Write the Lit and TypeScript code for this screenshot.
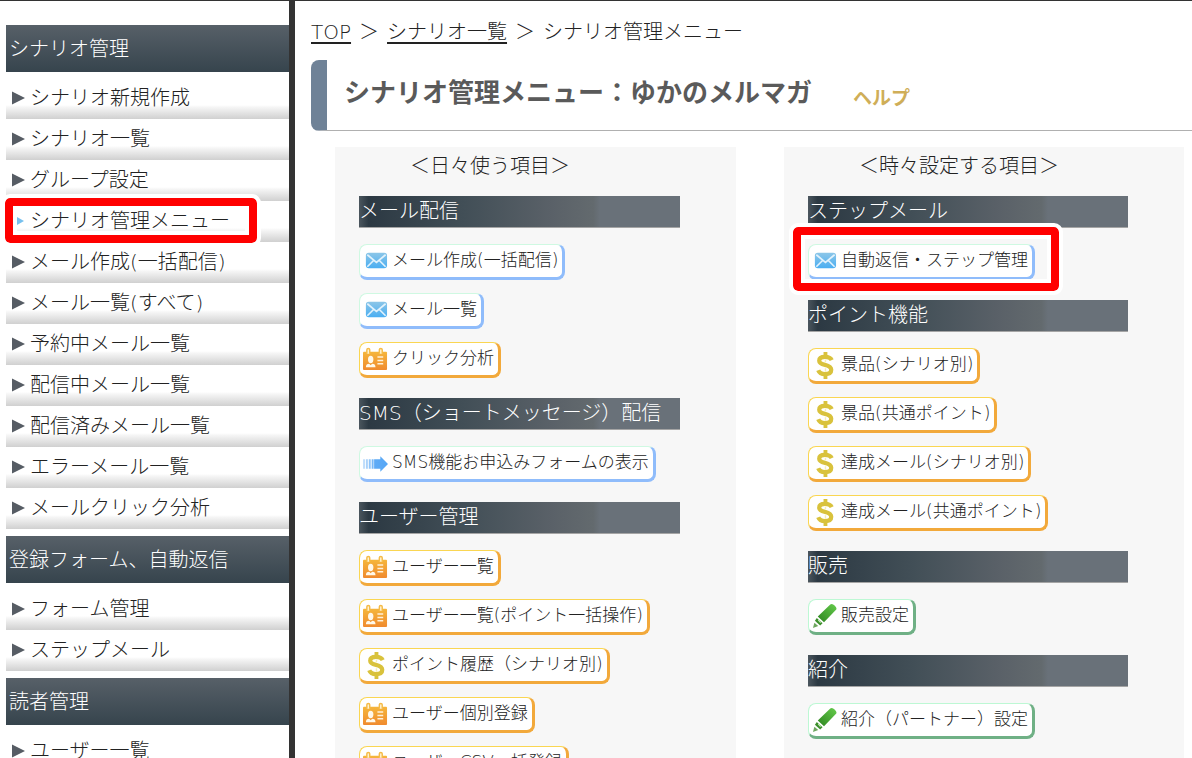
import { LitElement, html, css, svg } from "lit";
import { customElement } from "lit/decorators.js";

type Item = { label: string; icon: "mail" | "card" | "coin" | "pen" | "arrow"; tone: "blue" | "gold" | "green"; marked?: boolean };
type Group = { title: string; items: Item[] };

const mail = (label: string, marked = false): Item => ({ label, icon: "mail", tone: "blue", marked });
const card = (label: string): Item => ({ label, icon: "card", tone: "gold" });
const coin = (label: string): Item => ({ label, icon: "coin", tone: "gold" });
const pen = (label: string): Item => ({ label, icon: "pen", tone: "green" });

const NAV: { title: string; links: string[] }[] = [
  {
    title: "シナリオ管理",
    links: [
      "シナリオ新規作成", "シナリオ一覧", "グループ設定", "シナリオ管理メニュー", "メール作成(一括配信)",
      "メール一覧(すべて)", "予約中メール一覧", "配信中メール一覧", "配信済みメール一覧", "エラーメール一覧", "メールクリック分析",
    ],
  },
  { title: "登録フォーム、自動返信", links: ["フォーム管理", "ステップメール"] },
  { title: "読者管理", links: ["ユーザー一覧"] },
];
const CURRENT = "シナリオ管理メニュー";

const DAILY: Group[] = [
  { title: "メール配信", items: [mail("メール作成(一括配信)"), mail("メール一覧"), card("クリック分析")] },
  { title: "SMS（ショートメッセージ）配信", items: [{ label: "SMS機能お申込みフォームの表示", icon: "arrow", tone: "blue" }] },
  {
    title: "ユーザー管理",
    items: [
      card("ユーザー一覧"), card("ユーザー一覧(ポイント一括操作)"), coin("ポイント履歴（シナリオ別)"),
      card("ユーザー個別登録"), card("ユーザーCSV一括登録"),
    ],
  },
];

const OCCASIONAL: Group[] = [
  { title: "ステップメール", items: [mail("自動返信・ステップ管理", true)] },
  {
    title: "ポイント機能",
    items: [coin("景品(シナリオ別)"), coin("景品(共通ポイント)"), coin("達成メール(シナリオ別)"), coin("達成メール(共通ポイント)")],
  },
  { title: "販売", items: [pen("販売設定")] },
  { title: "紹介", items: [pen("紹介（パートナー）設定")] },
];

const ICONS = {
  mail: svg`
    <defs><linearGradient id="m" x1="0" y1="0" x2="0" y2="1"><stop offset="0" stop-color="#8cc6e8"/><stop offset="1" stop-color="#4aaef2"/></linearGradient></defs>
    <rect x="3" y="6" width="22" height="16" rx="3" fill="url(#m)"/>
    <path d="M4.500 8 L14 16 L23.500 8 M4.500 20.500 L11 14 M23.500 20.500 L17 14" fill="none" stroke="#e2f2fc" stroke-width="1.700"/>`,
  card: svg`
    <defs><linearGradient id="c" x1="0" y1="0" x2="0" y2="1"><stop offset="0" stop-color="#f5b63c"/><stop offset="1" stop-color="#f08a2e"/></linearGradient></defs>
    <rect x="0" y="7" width="25" height="19" rx="1" fill="url(#c)"/>
    <path d="M4 9 V5 Q4 3.500 5.500 3.500 T7 5 V9 M17 9 V5 Q17 3.500 18.500 3.500 T20 5 V9" fill="#fff3d0" stroke="#f5bb48" stroke-width="1.500"/>
    <ellipse cx="8" cy="15" rx="2.800" ry="3.800" fill="#fff8ea"/>
    <path d="M3 23 Q3 19.500 6.500 19.500 L8 21 L9.500 19.500 Q13 19.500 13 23 Z" fill="#fff8ea"/>
    <path d="M15 12.500 H21 M15 16 H21 M15 19.500 H21" stroke="#fff0d8" stroke-width="1.600"/>`,
  coin: svg`
    <path d="M20.500 9.500 Q19 6 13.500 6 Q7.500 6 7.500 10 Q7.500 13 13.500 14.300 Q20 15.800 20 19.500 Q20 24 13.500 24 Q8 24 6.500 20" fill="none" stroke="#d9c23c" stroke-width="4.400"/>
    <path d="M14 1 V6 M14 24 V29" stroke="#d9c23c" stroke-width="4"/>
    <path d="M14 9 V11.500 M14 18 V21.500" stroke="#f6efb5" stroke-width="1.500"/>`,
  pen: svg`
    <defs><linearGradient id="p" x1="1" y1="0" x2="0" y2="1"><stop offset="0" stop-color="#66cc4c"/><stop offset="1" stop-color="#2d8420"/></linearGradient></defs>
    <path d="M19 2.500 Q21 1 23.500 3.500 Q26.500 6.500 25 8 L12.500 21 L6 15 Z" fill="url(#p)"/>
    <path d="M5 16.500 L11 22 L8.500 24.500 L3 19.500 Z" fill="#3d8f2c"/>
    <path d="M2.500 21.500 L6.500 25 L1 27 Z" fill="#6da65e"/>
    <path d="M6.500 18.500 L9 21.500" stroke="#c8ebbd" stroke-width="1.200"/>`,
  arrow: svg`
    <defs><linearGradient id="a" gradientUnits="userSpaceOnUse" x1="0" y1="0" x2="26" y2="0"><stop offset="0" stop-color="#c8e1fb"/><stop offset="0.500" stop-color="#5fabf6"/><stop offset="1" stop-color="#55a6f5"/></linearGradient></defs>
    <path d="M0 10.500h2v10h-2z M3 10.500h2v10h-2z M6 10.500h2v10h-2z M9 10.500h2v10h-2z M11.500 10.500h6.500v-3l8 8 l-8 8v-3h-6.500z" fill="url(#a)"/>`,
};

@customElement("app-root")
export class AppRoot extends LitElement {
  static styles = css`
    :host {
      display: flex;
      height: 100vh;
      overflow: hidden;
      box-sizing: border-box;
      border-top: 1px solid #333;
      background: #fff;
      color: #222;
      font-family: "DejaVu Sans", "Noto Sans CJK JP", sans-serif;
      font-size: 20px;
      font-weight: 300;
      line-height: 30px;
    }
    * { box-sizing: border-box; }
    h1, h2, h3, ul, p { margin: 0; padding: 0; font-weight: inherit; font-size: inherit; }
    ul { list-style: none; }
    a { color: inherit; text-decoration: none; }

    .side { flex: 0 0 295px; padding: 24px 0 0 6px; border-right: 6px solid #333; overflow: hidden; }
    .side-title {
      padding: 9px 3px 8px;
      color: #fff;
      background: linear-gradient(#576068, #36444d);
    }
    .side-list { padding: 6px 0 7px; }
    .side-link {
      position: relative;
      display: flex;
      align-items: center;
      gap: 4px;
      height: 41px;
      padding: 0 0 1px 6px;
      background: linear-gradient(#fff 27px, #f6f6f6 29px, #d0d0d0);
    }
    .tri { width: 14px; height: 14px; flex: none; }
    .frame {
      position: absolute;
      border: 8px solid #f00;
      border-radius: 5px;
      outline: 4px solid #fff;
      box-shadow: inset 0 0 0 4px #fff;
      pointer-events: none;
    }
    .frame-side { left: -1px; top: -3px; width: 252px; height: 45px; z-index: 1; }
    .frame-main { left: -15px; right: -24px; top: -17px; height: 64px; }

    .main { flex: 1; min-width: 0; padding: 16px 0 0 16px; overflow: hidden; }
    .crumbs { display: flex; gap: 8px; }
    .crumbs a { text-decoration: underline; text-decoration-thickness: 2px; text-underline-offset: 3px; }
    .heading {
      display: flex;
      align-items: center;
      gap: 41px;
      height: 71px;
      margin-top: 13px;
      padding: 0 0 4px 17px;
      border-left: 16px solid #6f8297;
      border-bottom: 1px solid #b0b0b0;
      border-radius: 8px 0 0 8px;
    }
    .heading h1 { font-size: 26px; font-weight: 700; color: #5a5a5a; }
    .help { padding-top: 9px; font-size: 19px; font-weight: 700; color: #cfae58; }
    .columns { display: grid; grid-template-columns: 401px 400px; gap: 48px; padding: 16px 0 0 24px; }
    .column { padding: 4px 56px 24px 24px; background: #f7f7f7; }
    .column-title { padding: 0 0 15px 51px; }
    .group + .group { padding-top: 20px; }
    .group-title {
      height: 32px;
      color: #fff;
      white-space: nowrap;
      border-bottom: 1px solid #a5a5a5;
      background: linear-gradient(90deg, #4b565e 0, #2c3943 3%, #424f57 33%, #5a6168 60%, #636a6e 73%, #697179 75%, #697179);
    }
    .group-list { display: flex; flex-direction: column; align-items: flex-start; gap: 13px; padding: 16px 0 0; }
    .group-list li { position: relative; }
    .tool {
      display: flex;
      align-items: center;
      height: 36px;
      gap: 4px;
      padding: 0 4px 0 3px;
      border: 1px solid;
      border-right-width: 3px;
      border-bottom-width: 3px;
      border-radius: 8px;
      background: #fff;
      font-size: 17px;
      line-height: 26px;
      white-space: nowrap;
    }
    .tool span { padding-bottom: 2px; }
    .tool svg { width: 25px; height: 28px; flex: none; }
    .blue { border-color: #cff9e2 #8fbcfb #8fbcfb #cff9e2; }
    .gold { border-color: #fad652 #f2a93b #f2a93b #fad652; }
    .green { border-color: #bdf8d4 #6fb085 #6fb085 #bdf8d4; }
  `;

  private column(title: string, groups: Group[]) {
    return html`<section class="column">
      <h2 class="column-title">${title}</h2>
      ${groups.map((g) => html`<div class="group">
        <h3 class="group-title">${g.title}</h3>
        <ul class="group-list">
          ${g.items.map((i) => html`<li>
            <a class="tool ${i.tone}" href="#"><svg viewBox="0 0 26 29" aria-hidden="true">${ICONS[i.icon]}</svg><span>${i.label}</span></a>
            ${i.marked ? html`<div class="frame frame-main"></div>` : ""}
          </li>`)}
        </ul>
      </div>`)}
    </section>`;
  }

  private triangle(active: boolean) {
    return html`<svg class="tri" viewBox="0 0 14 14" aria-hidden="true">
      ${active ? svg`<path d="M5 3 L12 7 L5 11 Z" fill="#76c0ee"/>` : svg`<path d="M0 0.500 L13 7 L0 13.500 Z" fill="#565c64"/>`}
    </svg>`;
  }

  render() {
    return html`
      <nav class="side">
        ${NAV.map((s) => html`
          <h2 class="side-title">${s.title}</h2>
          <ul class="side-list">
            ${s.links.map((l) => html`<li>
              <a class="side-link" href="#">${this.triangle(l === CURRENT)}<span>${l}</span>
                ${l === CURRENT ? html`<div class="frame frame-side"></div>` : ""}</a>
            </li>`)}
          </ul>`)}
      </nav>
      <main class="main">
        <p class="crumbs"><a href="#">TOP</a><span>＞</span><a href="#">シナリオ一覧</a><span>＞</span><span>シナリオ管理メニュー</span></p>
        <div class="heading">
          <h1>シナリオ管理メニュー：ゆかのメルマガ</h1>
          <a class="help" href="#">ヘルプ</a>
        </div>
        <div class="columns">
          ${this.column("＜日々使う項目＞", DAILY)}
          ${this.column("＜時々設定する項目＞", OCCASIONAL)}
        </div>
      </main>`;
  }
}
